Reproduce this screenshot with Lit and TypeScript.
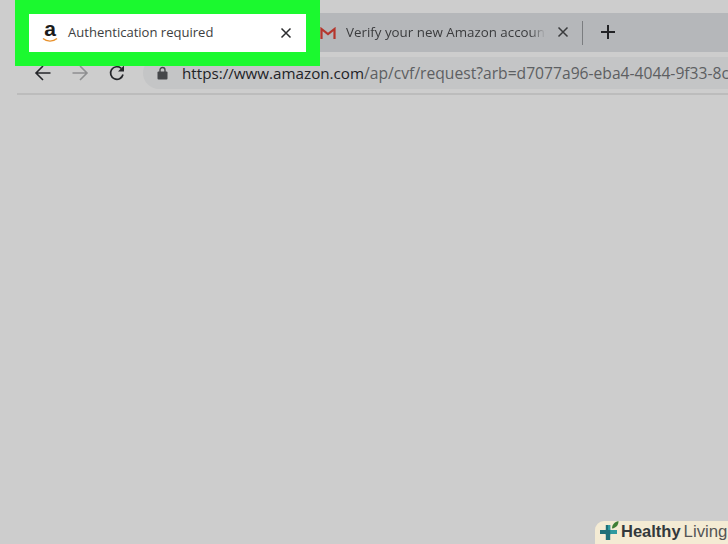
import { LitElement, html, css } from "lit";
import { customElement } from "lit/decorators.js";

@customElement("app-root")
export class AppRoot extends LitElement {
  static styles = css`
    :host { display: block; position: relative; width: 728px; height: 544px; overflow: hidden; background: #cdcdcd; font-family: "Open Sans", sans-serif; }
    .page { display: flex; flex-direction: column; padding-top: 13px; height: 100%; box-sizing: border-box; }
    .strip { height: 39px; background: #b5b7ba; margin-left: 300px; display: flex; align-items: center; box-sizing: border-box; padding-left: 20px; }
    .tab-ic { width: 16px; height: 12px; flex: none; display: block; }
    .tab-title { width: 204px; margin-left: 10px; font-size: 13.35px; line-height: 18px; margin-top: -2px; color: #3b3c3e; white-space: nowrap; overflow: hidden; -webkit-mask-image: linear-gradient(90deg, #000 90%, transparent 98%); mask-image: linear-gradient(90deg, #000 90%, transparent 98%); }
    .x { width: 12px; height: 12px; flex: none; display: block; }
    .strip .x { margin-left: 7px; margin-top: -1px; }
    .sep { width: 1px; height: 24px; background: #7b7d80; margin-left: 13px; }
    .plus { width: 16px; height: 16px; margin-left: 17px; margin-top: -1px; display: block; }
    .toolbar { height: 41px; margin-left: 17px; border-bottom: 2px solid #bcbcbc; display: flex; align-items: center; box-sizing: content-box; }
    .nav { width: 18px; height: 18px; display: block; flex: none; }
    .back { margin-left: 17px; }
    .fwd { margin-left: 19px; }
    .reload { margin-left: 19px; }
    .pill { margin-left: 17px; flex: 1; height: 32px; background: #c4c5c6; border-radius: 16px 0 0 16px; display: flex; align-items: center; padding-left: 14px; overflow: hidden; min-width: 0; }
    .lock { width: 11px; height: 14px; flex: none; display: block; }
    .url { margin-left: 14px; font-size: 15.65px; white-space: nowrap; color: #5d5f62; }
    .url b { font-weight: 400; font-size: 15.2px; color: #222326; }
    .callout { position: absolute; left: 15px; top: 0; width: 305px; height: 66px; box-sizing: border-box; padding: 14px; background: #1bf92f; }
    .active { height: 38px; background: #fff; display: flex; align-items: center; padding-left: 13px; }
    .a-logo { width: 16px; height: 20px; flex: none; position: relative; margin-top: -1px; }
    .a-letter { font-family: "Liberation Sans", sans-serif; font-weight: 700; font-size: 21px; line-height: 18px; color: #1b1b1b; display: block; text-align: center; margin-top: -3px; }
    .smile { position: absolute; left: 0; top: 14px; width: 16px; height: 6px; display: block; }
    .active-title { margin-left: 10px; font-size: 13.05px; line-height: 18px; margin-top: -2px; color: #3d3e40; width: 209px; white-space: nowrap; }
    .active .x { margin-left: 3px; margin-top: -1px; }
    .badge { position: absolute; left: 595px; right: 0; bottom: 0; height: 23px; background: #f4ebd4; border-radius: 9px 0 0 0; display: flex; align-items: center; padding-left: 4px; font-family: "Liberation Sans", sans-serif; font-size: 16.5px; color: #4b4b4b; white-space: nowrap; }
    .badge svg { width: 22px; height: 24px; flex: none; display: block; align-self: flex-start; margin-top: -1px; }
    .badge b { color: #33393c; margin-top: -2px; }
    .badge span { margin-left: 3px; margin-top: -2px; font-size: 16.8px; font-weight: 400; color: #555; }
  `;

  private x(color: string) {
    return html`<svg class="x" viewBox="0 0 12 12"><path d="M1.500 1.500l9 9M10.500 1.500l-9 9" stroke=${color} stroke-width="1.500" fill="none"/></svg>`;
  }

  render() {
    return html`
      <div class="page">
        <div class="strip">
          <svg class="tab-ic" viewBox="0 0 16 12"><path d="M1.500 12V2L8 7l6.500-5v10" fill="none" stroke="#b5352c" stroke-width="2.200"/></svg>
          <div class="tab-title">Verify your new Amazon account</div>
          ${this.x("#3a3b3d")}
          <div class="sep"></div>
          <svg class="plus" viewBox="0 0 16 16"><path d="M8 1v14M1 8h14" stroke="#222326" stroke-width="2" fill="none"/></svg>
        </div>
        <div class="toolbar">
          <svg class="nav back" viewBox="0 0 18 18"><path d="M16.500 9H2M9 2L2 9l7 7" fill="none" stroke="#25262a" stroke-width="1.600"/></svg>
          <svg class="nav fwd" viewBox="0 0 18 18"><path d="M1.500 9H16M9 2l7 7-7 7" fill="none" stroke="#8e8f91" stroke-width="1.600"/></svg>
          <svg class="nav reload" viewBox="0 0 18 18"><path d="M15 10.500A6.300 6.300 0 1 1 13.200 4.400" fill="none" stroke="#25262a" stroke-width="1.700"/><path d="M16 1.500V7.500H10z" fill="#25262a"/></svg>
          <div class="pill">
            <svg class="lock" viewBox="0 0 11 14"><path d="M3 6V4a2.500 2.500 0 0 1 5 0v2" fill="none" stroke="#45474a" stroke-width="1.400"/><rect x="0.500" y="5.500" width="10" height="8" rx="1" fill="#45474a"/></svg>
            <div class="url"><b>https://www.amazon.com</b>/ap/cvf/request?arb=d7077a96-eba4-4044-9f33-8c</div>
          </div>
        </div>
      </div>
      <div class="callout">
        <div class="active">
          <div class="a-logo">
            <span class="a-letter">a</span>
            <svg class="smile" viewBox="0 0 16 6"><path d="M1 1.500C5 5 11 5 15 1.500" fill="none" stroke="#e8912c" stroke-width="1.400"/></svg>
          </div>
          <div class="active-title">Authentication required</div>
          ${this.x("#2c2d2f")}
        </div>
      </div>
      <div class="badge">
        <svg viewBox="0 0 22 24">
          <path d="M6.800 5h4.400v4.500c0 .4.200.6.600.6H18v4h-6.200c-.4 0-.6.200-.6.600V20H6.800v-5.300c0-.4-.2-.6-.6-.6H1v-4h5.200c.4 0 .6-.2.600-.6z" fill="#1f6f78"/>
          <path d="M9 10.100h2.200v-5H9zM11.200 10.100H18v4h-6.800z" fill="#2f9aa0"/>
          <path d="M13 8.500c0-3.800 2.500-6.500 6.500-7.500 0 4-2 6.800-6.500 7.500z" fill="#3f7f35"/>
        </svg>
        <b>Healthy</b><span>Living</span>
      </div>
    `;
  }
}
